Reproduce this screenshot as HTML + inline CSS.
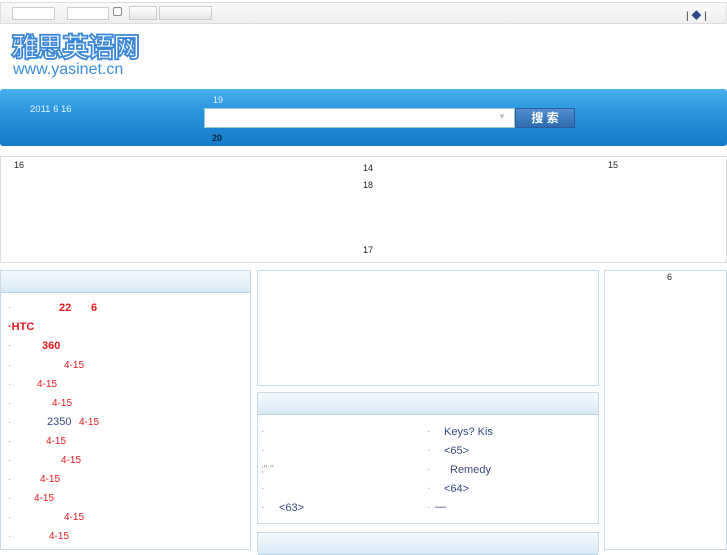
<!DOCTYPE html>
<html><head><meta charset="utf-8"><style>
*{margin:0;padding:0;box-sizing:border-box}
body{width:727px;height:545px;overflow:hidden;background:#fff;font-family:"Liberation Sans","Noto Sans CJK SC",sans-serif;position:relative}
.a{position:absolute}
.t{font-size:10px;color:#222}
.hd{background:linear-gradient(#f4f9fd,#d7e9f6);border-bottom:1px solid #bcd4e6}
.box{border:1px solid #c9d9e6}
.l{position:absolute;font-size:10px;color:#999}
.r{color:#e8191e;font-weight:bold;font-size:11px}
.r2{color:#e8191e;font-size:10px}
.b{color:#3a4a80;font-size:11px}
</style></head><body>
<div class="a" style="left:0;top:2px;width:727px;height:22px;border:1px solid #ddd;background:linear-gradient(#fafafa,#efefef)"></div>
<div class="a" style="left:12px;top:7px;width:43px;height:13px;border:1px solid #ccc;background:#fff"></div>
<div class="a" style="left:67px;top:7px;width:42px;height:13px;border:1px solid #ccc;background:#fff"></div>
<div class="a" style="left:113px;top:7px;width:9px;height:9px;border:1px solid #888;border-radius:2px;background:#fff"></div>
<div class="a" style="left:129px;top:6px;width:28px;height:14px;border:1px solid #ccc;background:linear-gradient(#fff,#e6e6e6)"></div>
<div class="a" style="left:159px;top:6px;width:53px;height:14px;border:1px solid #ccc;background:linear-gradient(#fff,#e6e6e6)"></div>
<div class="a" style="left:686px;top:7px;font-size:10px;color:#333">| <span style="color:#2a4a8a">◆</span> |</div>
<div class="a" style="left:11px;top:33px;font-size:27px;font-weight:bold;color:#fff;-webkit-text-stroke:1.8px #3a86d8;letter-spacing:-1.5px;line-height:30px">雅思英语网</div>
<div class="a" style="left:13px;top:61px;font-size:16px;color:#3a8ee0;line-height:17px">www.yasinet.cn</div>
<div class="a" style="left:0;top:89px;width:727px;height:57px;background:linear-gradient(#47b0ee,#2a95df 40%,#127bcc);border-radius:3px"></div>
<div class="a" style="left:30px;top:104px;font-size:9.5px;color:#e8f3fc">2011 6 16</div>
<div class="a" style="left:213px;top:95px;font-size:9px;color:#e8f3fc">19</div>
<div class="a" style="left:204px;top:108px;width:311px;height:20px;background:#fff;border:1px solid #9cc"></div>
<div class="a" style="left:498px;top:112px;font-size:8px;color:#bbb">▼</div>
<div class="a" style="left:515px;top:108px;width:60px;height:20px;background:linear-gradient(#4f8ecf,#2e6bb0);border:1px solid #2a5d99;color:#fff;font-size:12px;font-weight:bold;text-align:center;line-height:18px">搜 索</div>
<div class="a" style="left:212px;top:133px;font-size:9px;font-weight:bold;color:#123">20</div>
<div class="a" style="left:0;top:156px;width:727px;height:107px;border:1px solid #ddd"></div>
<div class="a t" style="left:14px;top:160px;font-size:9px">16</div>
<div class="a t" style="left:363px;top:163px;font-size:9px">14</div>
<div class="a t" style="left:608px;top:160px;font-size:9px">15</div>
<div class="a t" style="left:363px;top:180px;font-size:9px">18</div>
<div class="a t" style="left:363px;top:245px;font-size:9px">17</div>
<div class="a box" style="left:0;top:270px;width:251px;height:280px"><div class="hd" style="height:22px"></div></div>
<div class="a box" style="left:257px;top:270px;width:342px;height:116px"></div>
<div class="a box" style="left:257px;top:392px;width:342px;height:132px"><div class="hd" style="height:22px"></div></div>
<div class="a box" style="left:257px;top:532px;width:342px;height:20px"><div class="hd" style="height:22px"></div></div>
<div class="a box" style="left:604px;top:270px;width:123px;height:280px"></div>
<div class="a t" style="left:667px;top:272px;font-size:9px">6</div>
<div class="l" style="left:8px;top:302px">·</div><div class="a r" style="left:59px;top:302px">22</div><div class="a r" style="left:91px;top:302px">6</div>
<div class="a r" style="left:8px;top:321px">·HTC</div>
<div class="l" style="left:8px;top:340px">·</div><div class="a r" style="left:42px;top:340px">360</div>
<div class="l" style="left:8px;top:360px">·</div><div class="a r2" style="left:64px;top:360px">4-15</div>
<div class="l" style="left:8px;top:379px">·</div><div class="a r2" style="left:37px;top:379px">4-15</div>
<div class="l" style="left:8px;top:398px">·</div><div class="a r2" style="left:52px;top:398px">4-15</div>
<div class="l" style="left:8px;top:417px">·</div><div class="a b" style="left:47px;top:416px">2350</div><div class="a r2" style="left:79px;top:417px">4-15</div>
<div class="l" style="left:8px;top:436px">·</div><div class="a r2" style="left:46px;top:436px">4-15</div>
<div class="l" style="left:8px;top:455px">·</div><div class="a r2" style="left:61px;top:455px">4-15</div>
<div class="l" style="left:8px;top:474px">·</div><div class="a r2" style="left:40px;top:474px">4-15</div>
<div class="l" style="left:8px;top:493px">·</div><div class="a r2" style="left:34px;top:493px">4-15</div>
<div class="l" style="left:8px;top:512px">·</div><div class="a r2" style="left:64px;top:512px">4-15</div>
<div class="l" style="left:8px;top:531px">·</div><div class="a r2" style="left:49px;top:531px">4-15</div>
<div class="l" style="left:261px;top:426px">·</div><div class="l" style="left:427px;top:426px">·</div><div class="a b" style="left:444px;top:426px">Keys? Kis</div>
<div class="l" style="left:261px;top:445px">·</div><div class="l" style="left:427px;top:445px">·</div><div class="a b" style="left:444px;top:445px">&lt;65&gt;</div>
<div class="l" style="left:261px;top:464px">;" "</div><div class="l" style="left:427px;top:464px">·</div><div class="a b" style="left:450px;top:464px">Remedy</div>
<div class="l" style="left:261px;top:483px">·</div><div class="l" style="left:427px;top:483px">·</div><div class="a b" style="left:444px;top:483px">&lt;64&gt;</div>
<div class="l" style="left:261px;top:502px">·</div><div class="a b" style="left:279px;top:502px">&lt;63&gt;</div><div class="l" style="left:427px;top:502px">·</div><div class="a b" style="left:435px;top:501px">—</div>
</body></html>
